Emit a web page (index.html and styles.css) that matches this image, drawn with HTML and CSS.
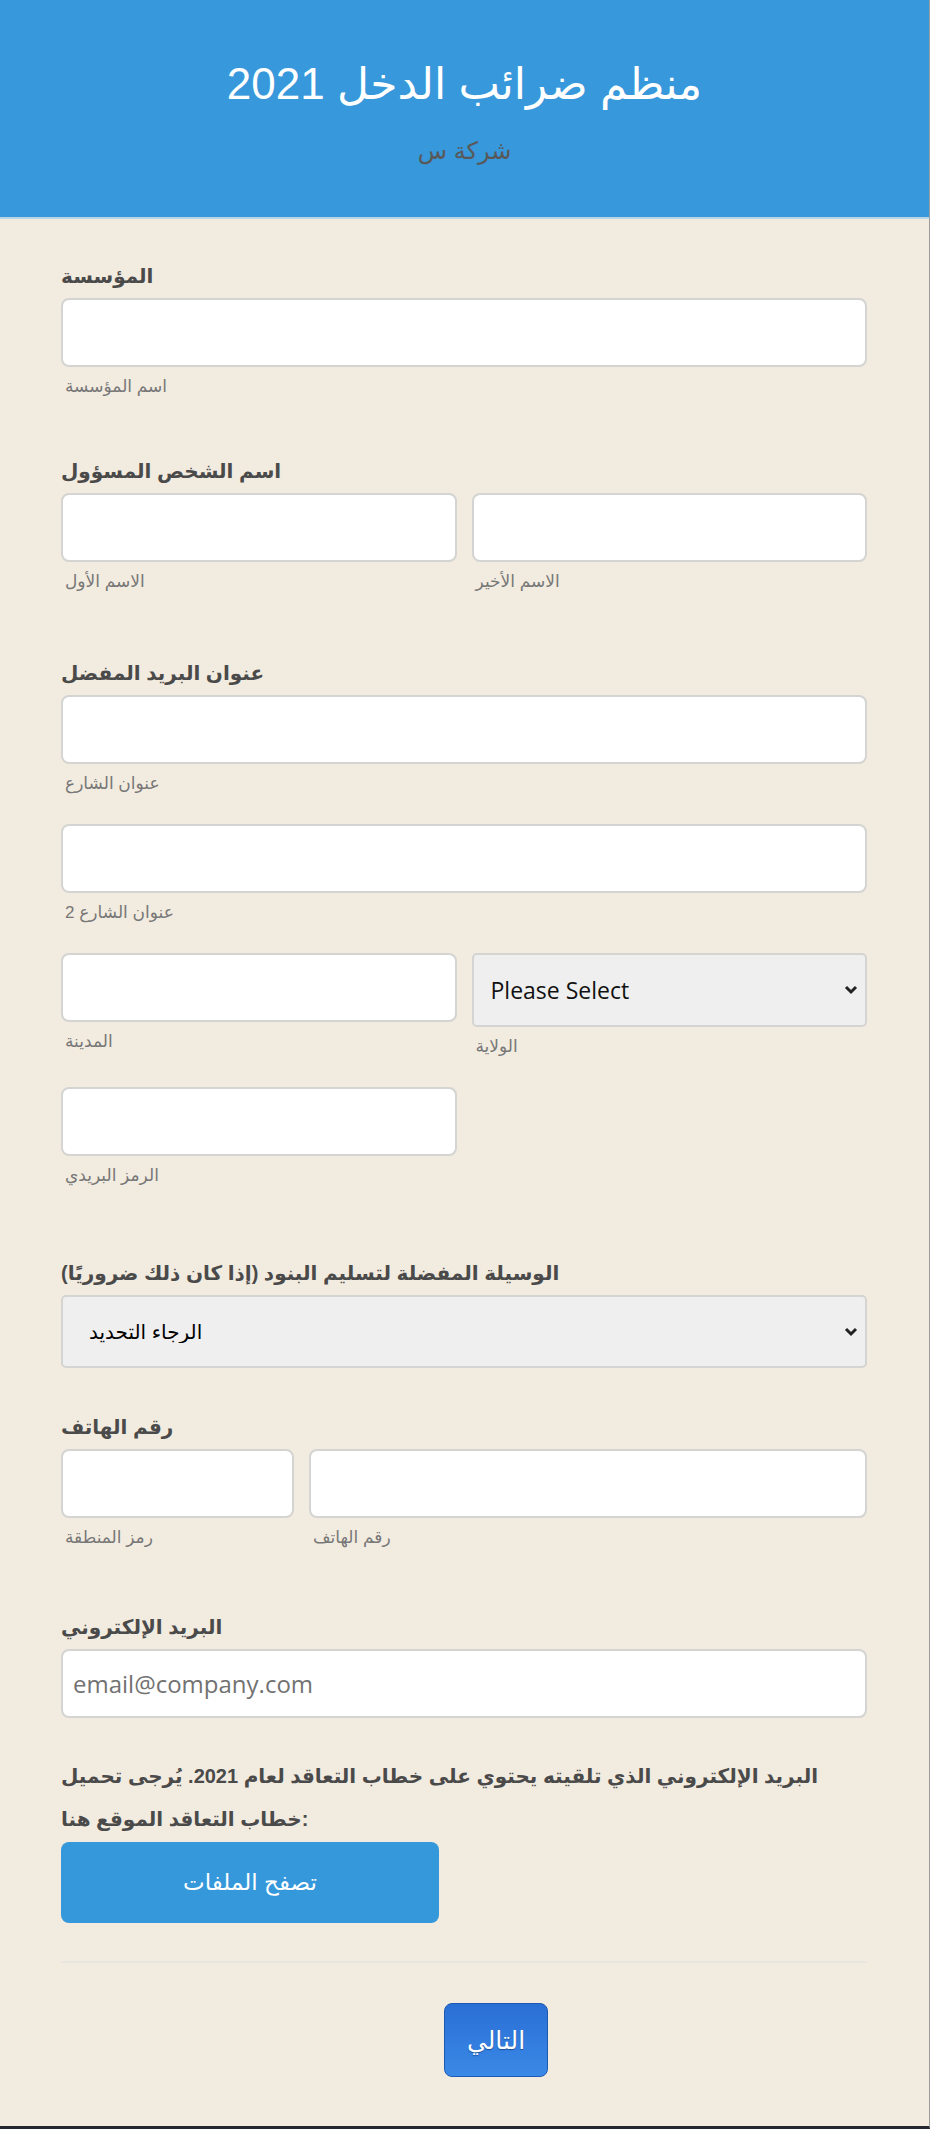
FILE: index.html
```html
<!DOCTYPE html>
<html>
<head>
    <title>منظم ضرائب الدخل 2021</title>
    <link rel="stylesheet" href="styles.css">
</head>
<body>

<div class="page">
    <div class="header">
        <h1>منظم ضرائب الدخل 2021</h1>
        <p class="company">شركة س</p>
    </div>

    <form class="form">
        <div class="field">
            <label class="label">المؤسسة</label>
            <input type="text" class="input">
            <span class="sub">اسم المؤسسة</span>
        </div>

        <div class="field gap-md">
            <label class="label">اسم الشخص المسؤول</label>
            <div class="row">
                <div class="col">
                    <input type="text" class="input">
                    <span class="sub">الاسم الأول</span>
                </div>
                <div class="col">
                    <input type="text" class="input">
                    <span class="sub">الاسم الأخير</span>
                </div>
            </div>
        </div>

        <div class="field gap-lg">
            <label class="label">عنوان البريد المفضل</label>
            <input type="text" class="input">
            <span class="sub">عنوان الشارع</span>
            <div class="line">
                <input type="text" class="input">
                <span class="sub">عنوان الشارع 2</span>
            </div>
            <div class="row line">
                <div class="col">
                    <input type="text" class="input">
                    <span class="sub">المدينة</span>
                </div>
                <div class="col">
                    <select class="select select-tall">
                        <option>Please Select</option>
                    </select>
                    <span class="sub">الولاية</span>
                </div>
            </div>
            <div class="row line">
                <div class="col">
                    <input type="text" class="input">
                    <span class="sub">الرمز البريدي</span>
                </div>
                <div class="col"></div>
            </div>
        </div>

        <div class="field gap-xl">
            <label class="label">الوسيلة المفضلة لتسليم البنود (إذا كان ذلك ضروريًا)</label>
            <select class="select select-ar">
                <option>الرجاء التحديد</option>
            </select>
        </div>

        <div class="field gap-sm">
            <label class="label">رقم الهاتف</label>
            <div class="row phone">
                <div class="col area">
                    <input type="text" class="input">
                    <span class="sub">رمز المنطقة</span>
                </div>
                <div class="col">
                    <input type="text" class="input">
                    <span class="sub">رقم الهاتف</span>
                </div>
            </div>
        </div>

        <div class="field gap-ml">
            <label class="label">البريد الإلكتروني</label>
            <input type="email" class="input" placeholder="email@company.com">
        </div>

        <div class="field gap-xs">
            <label class="label label-long">البريد الإلكتروني الذي تلقيته يحتوي على خطاب التعاقد لعام 2021. يُرجى تحميل<br>خطاب التعاقد الموقع هنا:</label>
            <button type="button" class="browse">تصفح الملفات</button>
        </div>

        <hr class="divider">

        <div class="actions">
            <button type="button" class="next">التالي</button>
        </div>
    </form>
</div>

</body>
</html>
```

FILE: styles.css
```css
body {
    margin: 0;
    padding: 0;
    font-family: "Liberation Sans", "DejaVu Sans", sans-serif;
    background-color: #f2ebdf;
}
.page {
    height: 2126px;
    border-right: 1px solid #9c9c9c;
    border-bottom: 3px solid #23272e;
    background-color: #f2ebdf;
}
.header {
    height: 219px;
    box-sizing: border-box;
    padding-top: 56px;
    background: #3798db;
    border-bottom: 2px solid #b7d6e8;
    text-align: center;
}
.header h1 {
    margin: 0;
    font-size: 44px;
    line-height: 56px;
    font-weight: normal;
    color: #fff;
}
.company {
    margin: 22px 0 0;
    font-size: 24px;
    line-height: 34px;
    color: #595959;
}
.form {
    padding: 42px 62px 0 61px;
}
.field {
    display: flex;
    flex-direction: column;
    align-items: flex-start;
}
.gap-xs { margin-top: 37px; }
.gap-sm { margin-top: 44px; }
.gap-md { margin-top: 57px; }
.gap-ml { margin-top: 62px; }
.gap-lg { margin-top: 64px; }
.gap-xl { margin-top: 70px; }
.label {
    display: block;
    font-size: 20px;
    line-height: 30px;
    font-weight: bold;
    color: #4a4a4a;
    margin-bottom: 7px;
}
.label-long {
    line-height: 43px;
    margin-bottom: 1px;
}
.input {
    box-sizing: border-box;
    width: 100%;
    height: 69px;
    padding: 0 26px 0 10px;
    border: 2px solid #d4d4d2;
    border-radius: 8px;
    background: #fff;
    font-family: "Open Sans", sans-serif;
    font-size: 24px;
    color: #333;
}
.input::placeholder {
    color: #727272;
}
.sub {
    display: block;
    margin-top: 8px;
    padding-left: 4px;
    font-size: 17px;
    line-height: 24px;
    color: #777;
}
.line {
    margin-top: 28px;
    width: 100%;
}
.row {
    display: flex;
    gap: 15px;
    width: 100%;
}
.col {
    flex: 1;
    display: flex;
    flex-direction: column;
    align-items: flex-start;
}
.phone .area {
    flex: 0 0 233px;
}
.select {
    box-sizing: border-box;
    width: 100%;
    height: 73px;
    padding: 0 30px 0 17px;
    border: 2px solid #d4d4d2;
    border-radius: 5px;
    background: #efefef url("data:image/svg+xml,%3Csvg xmlns='http://www.w3.org/2000/svg' width='14' height='10' viewBox='0 0 14 10'%3E%3Cpath d='M2 2l5 5 5-5' fill='none' stroke='%23222' stroke-width='3'/%3E%3C/svg%3E") no-repeat right 7px center;
    -webkit-appearance: none;
    appearance: none;
    font-family: "Open Sans", sans-serif;
    font-size: 23px;
    color: #111;
}
.select-tall {
    height: 74px;
}
.select-ar {
    font-family: "Liberation Sans", "DejaVu Sans", sans-serif;
    font-size: 20px;
    color: #000;
    padding-left: 26px;
}
.browse {
    width: 378px;
    height: 81px;
    border: none;
    border-radius: 8px;
    background: #3598db;
    color: #fff;
    font-family: "Liberation Sans", "DejaVu Sans", sans-serif;
    font-size: 23px;
}
.divider {
    margin: 38px 0 0;
    border: none;
    height: 2px;
    background: #e7e6e1;
}
.actions {
    display: flex;
    justify-content: center;
    padding: 40px 0 0 64px;
}
.next {
    width: 104px;
    height: 74px;
    border: 1px solid #1d58b3;
    border-radius: 8px;
    background: linear-gradient(#2a6fd5, #3a89e6);
    color: #fff;
    font-family: "Liberation Sans", "DejaVu Sans", sans-serif;
    font-size: 25px;
    text-shadow: 0 1px 1px #1d4f99;
}
```
